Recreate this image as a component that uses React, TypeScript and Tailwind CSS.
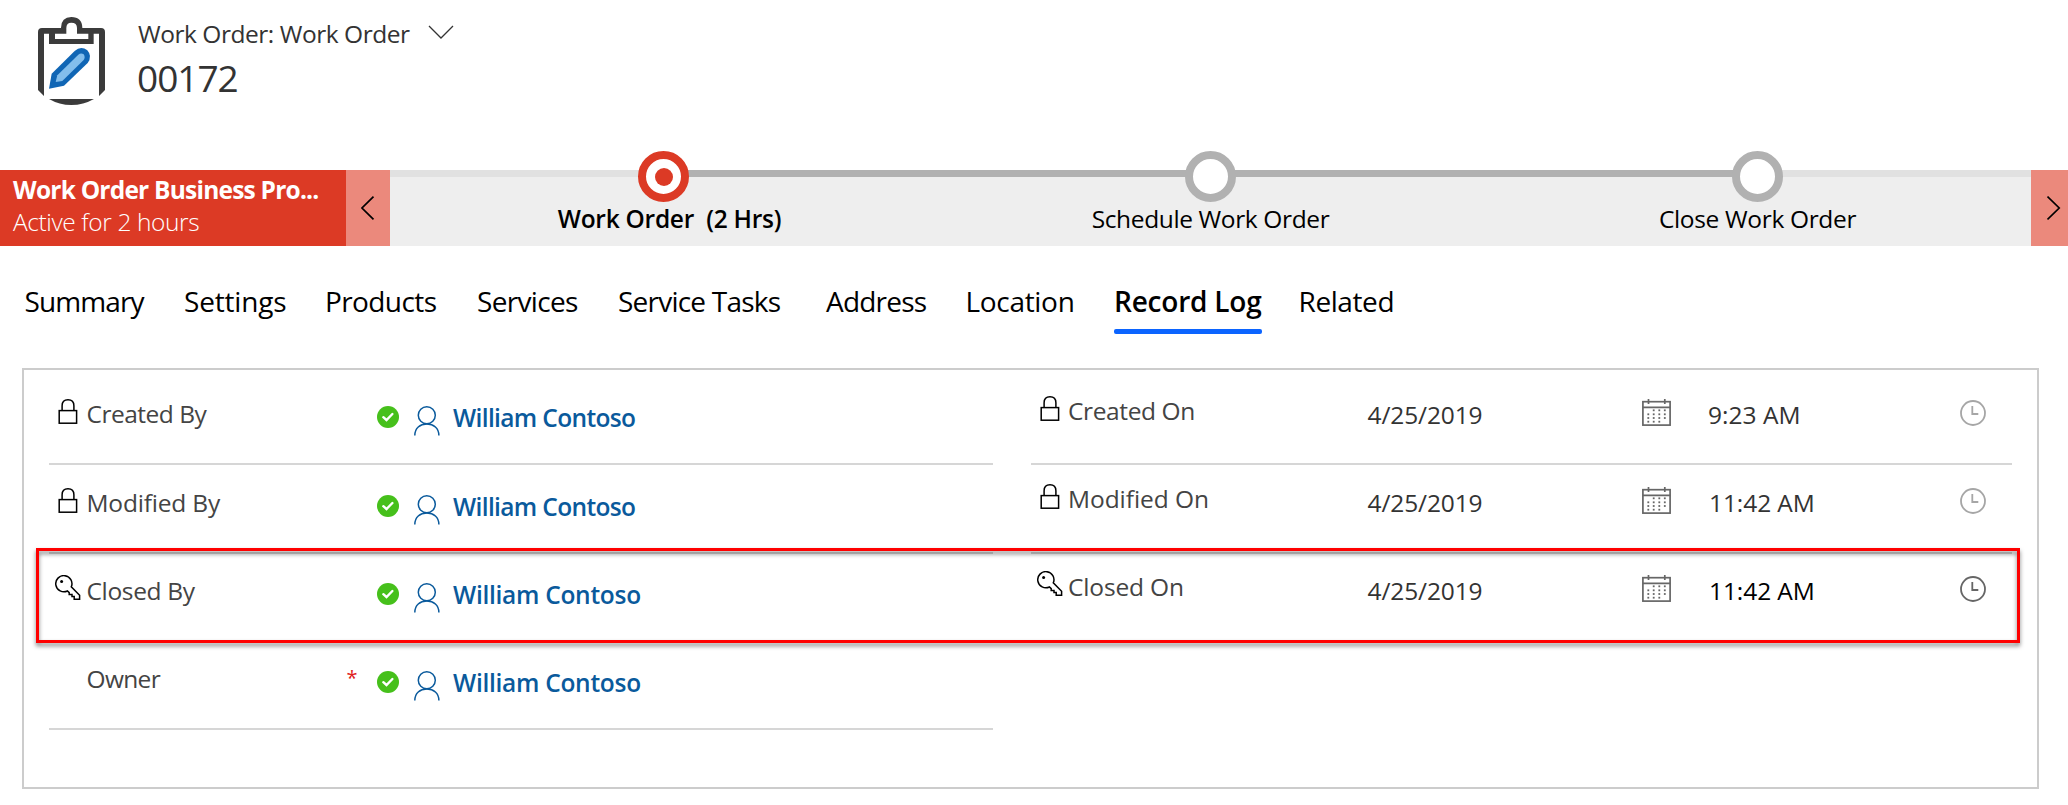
import type { ReactNode } from "react";

const tabs = [
  { name: "Summary", cls: "w-[160px] pl-px tracking-[-0.9px]" },
  { name: "Settings", cls: "w-[141.5px] pl-[0.5px] tracking-[-0.19px]" },
  { name: "Products", cls: "w-[152px] tracking-[-0.6px]" },
  { name: "Services", cls: "w-[141px] tracking-[-0.66px]" },
  { name: "Service Tasks", cls: "w-[208px] tracking-[-0.78px]" },
  { name: "Address", cls: "w-[139px] tracking-[-0.8px]" },
  { name: "Location", cls: "w-[149px] pl-[0.5px] tracking-[-0.31px]" },
  { name: "Record Log", cls: "w-[184px] tracking-[-0.22px]", active: true },
  { name: "Related", cls: "pl-[0.5px] tracking-[-0.4px]" },
];

const people = [
  { label: "Created By", icon: "lock", labelCls: "tracking-[-0.5px]", nameCls: "tracking-[-0.64px]", rowCls: "h-[95px]" },
  { label: "Modified By", icon: "lock", labelCls: "tracking-[-0.18px]", nameCls: "tracking-[-0.64px]", rowCls: "h-[89px]" },
  { label: "Closed By", icon: "key", labelCls: "tracking-[-0.35px]", nameCls: "tracking-[-0.28px]", rowCls: "h-[88px]" },
  { label: "Owner", icon: "", labelCls: "tracking-[-0.65px]", nameCls: "tracking-[-0.28px]", rowCls: "h-[88px]", required: true },
];

const dates = [
  { label: "Created On", icon: "lock", labelCls: "tracking-[-0.38px]", time: "9:23 AM", timeCls: "tracking-[0.05px] text-[#333]", clockCls: "text-[#a6a6a6]", rowCls: "h-[95px]" },
  { label: "Modified On", icon: "lock", labelCls: "tracking-[-0.05px]", time: "11:42 AM", timeCls: "pl-px tracking-[-0.08px] text-[#333]", clockCls: "text-[#a6a6a6]", rowCls: "h-[89px] pb-px" },
  { label: "Closed On", icon: "key", labelCls: "tracking-[-0.15px]", time: "11:42 AM", timeCls: "pl-px tracking-[-0.08px] text-black", clockCls: "text-[#666]", rowCls: "h-[88px] pb-px" },
];

function WorkOrderIcon() {
  return (
    <svg viewBox="114 51 201 264" className="h-[88px] w-[67px]">
      <path
        fill="#3b3b3b"
        fillRule="evenodd"
        d="M132 288 114 270V96Q114 84 126 84H183V83Q184 51 214 51 246 51 247 83V84H303Q315 84 315 96V270L297 288V101H281V132H147V101H132ZM165 101V117H265V101H231V84Q231 68 214 68 199 68 199 84V101Z"
      />
      <path fill="#3b3b3b" d="M147 297H282Q250 315 214 315 178 315 147 297Z" />
      <path fill="#1066b5" d="M147 266 155 221 224 153Q243 136 262 151 278 169 263 189L192 257Z" />
      <path fill="#83beec" d="M167 246 172 226 235 164Q243 157 251 163 257 172 251 180L187 243Z" />
    </svg>
  );
}

function Lock() {
  return (
    <svg viewBox="0 0 26 25" className="h-[25px] w-[26px]" fill="none" stroke="#000" strokeWidth="1.5">
      <rect x="4.2" y="11.6" width="17.4" height="12.6" />
      <path d="M7.1 11.5V6.8Q7.1.8 13 .8T18.9 6.8V11.5" />
    </svg>
  );
}

function Key() {
  return (
    <svg viewBox="0 0 26 26" className="h-[26px] w-[26px]" fill="none" stroke="#000" strokeWidth="1.5">
      <path d="M16.3 11.9A8.1 8.1 0 1 0 12.4 16L14.2 17.6V19.4H17V21.4H19.2V24.3H24.6V20.2Z" />
      <circle cx="6.6" cy="6.4" r="1.5" fill="#000" stroke="none" />
    </svg>
  );
}

function FieldIcon({ kind }: { kind: string }) {
  return <span className="w-[26px]">{kind === "lock" ? <Lock /> : kind === "key" ? <Key /> : null}</span>;
}

function Check() {
  return (
    <svg viewBox="0 0 22 22" className="mb-[35px] size-[22px]">
      <circle cx="11" cy="11" r="11" fill="#46c01b" />
      <path d="M6.3 11.2 9.5 14 15.4 8" fill="none" stroke="#fff" strokeWidth="2.4" strokeLinecap="round" />
    </svg>
  );
}

function Person() {
  return (
    <svg viewBox="0 0 26 30" className="mb-[27px] ml-[14.5px] h-[30px] w-[26px]" fill="none" stroke="#0a5a9c" strokeWidth="1.5">
      <circle cx="12.8" cy="9.3" r="8.5" />
      <path d="M.8 29.5C.8 22 6 18 12.8 18S24.9 22 24.9 29.5" />
    </svg>
  );
}

const dots = [
  [11.7, 11.3], [17.3, 11.3], [22.8, 11.3],
  [6.3, 15.3], [11.7, 15.3], [17.3, 15.3], [22.8, 15.3],
  [6.3, 19], [11.7, 19], [17.3, 19], [22.8, 19],
  [6.3, 22.7], [11.7, 22.7], [17.3, 22.7],
];

function Calendar() {
  return (
    <svg viewBox="0 0 29 27" className="mb-[37px] h-[27px] w-[29px]" fill="none" stroke="#666" strokeWidth="1.7">
      <rect x=".9" y="2.7" width="27.2" height="23.4" />
      <path d="M.8 8.3H28.2M6.5 0V5M22.8 0V5" />
      {dots.map(([x, y]) => (
        <rect key={`${x}-${y}`} x={x - 0.9} y={y - 0.9} width="1.8" height="1.8" fill="#666" stroke="none" />
      ))}
    </svg>
  );
}

function Clock({ className }: { className: string }) {
  return (
    <svg viewBox="0 0 26 26" className={`mb-[37px] size-[26px] ${className}`} fill="none" stroke="currentColor" strokeWidth="1.8">
      <circle cx="13" cy="13" r="12" />
      <path d="M12.3 6V14H18.3" />
    </svg>
  );
}

function Stage({ left, right, label, labelCls, active }: { left: string; right: string; label: string; labelCls: string; active?: boolean }) {
  return (
    <div className="flex flex-col items-center">
      <div className="flex h-[7px] w-full">
        <div className={`flex-1 ${left}`} />
        <div className={`flex-1 ${right}`} />
      </div>
      <div
        className={`z-10 -mt-[26px] flex size-[51px] items-center justify-center rounded-full border-8 bg-white ${
          active ? "border-[#dc3a25]" : "border-[#b1b1b1]"
        }`}
      >
        {active && <div className="size-[18px] rounded-full bg-[#dc3a25]" />}
      </div>
      <div className={`mt-px whitespace-pre text-[24.5px] leading-8 text-black ${labelCls}`}>{label}</div>
    </div>
  );
}

function Label({ children, className }: { children: ReactNode; className: string }) {
  return <div className={`text-[24.5px] leading-8 text-[#444] ${className}`}>{children}</div>;
}

export default function App() {
  return (
    <div className="h-[805px] w-[2068px] overflow-hidden whitespace-nowrap bg-white font-['Open_Sans','Noto_Sans',sans-serif]">
      <header className="flex h-[170px] pl-[38px] pt-[17px]">
        <WorkOrderIcon />
        <div className="ml-[33px] flex flex-col text-[#333]">
          <div className="flex items-start">
            <span className="w-[290px] pt-px text-[24.5px] leading-8 tracking-[-0.46px]">Work Order: Work Order</span>
            <svg viewBox="0 0 26 14" className="mt-[8px] h-[14px] w-[26px]" fill="none" stroke="#333" strokeWidth="1.3">
              <path d="M1 1 13 13 25 1" />
            </svg>
          </div>
          <h1 className="mt-[4px] -ml-[1px] text-[37px] leading-[48px] tracking-[-1px]">00172</h1>
        </div>
      </header>

      <section className="flex h-[76px]">
        <div className="w-[346px] bg-[#dc3a25] pl-[13px] pt-[4px] text-[24.5px] text-white">
          <div className="leading-8 font-bold tracking-[-0.78px]">Work Order Business Pro...</div>
          <div className="leading-8 font-light tracking-[-0.4px]">Active for 2 hours</div>
        </div>
        <div className="w-[44px] bg-[#eb897c] pl-[15px] pt-[26px]">
          <svg viewBox="0 0 14 24" className="h-6 w-[14px]" fill="none" stroke="#000" strokeWidth="1.7">
            <path d="M12.5.6 1 12 12.5 23.4" />
          </svg>
        </div>
        <div className="grid w-[1641px] grid-cols-3 bg-[#eee]">
          <Stage active left="bg-[#e1e1e1]" right="bg-[#b1b1b1]" label="Work Order  (2 Hrs)" labelCls="pl-3 font-semibold tracking-[-0.26px]" />
          <Stage left="bg-[#b1b1b1]" right="bg-[#b1b1b1]" label="Schedule Work Order" labelCls="tracking-[-0.37px]" />
          <Stage left="bg-[#b1b1b1]" right="bg-[#e1e1e1]" label="Close Work Order" labelCls="tracking-[-0.34px]" />
        </div>
        <div className="w-[37px] bg-[#eb897c] pl-[16px] pt-[26px]">
          <svg viewBox="0 0 14 24" className="h-6 w-[14px]" fill="none" stroke="#000" strokeWidth="1.7">
            <path d="M.5.6 12.2 12 .5 23.4" />
          </svg>
        </div>
      </section>

      <nav className="flex h-[122px] pl-[23.5px] pt-[35px] text-[28px] leading-10 text-black">
        {tabs.map((t) => (
          <div key={t.name} className={t.cls}>
            {t.active ? (
              <div className="w-[148px]">
                <div className="font-semibold">{t.name}</div>
                <div className="mt-[8px] h-[5px] rounded-[2px] bg-[#0b64ff]" />
              </div>
            ) : (
              t.name
            )}
          </div>
        ))}
      </nav>

      <main className="relative ml-[22px] flex h-[421px] w-[2017px] gap-[38px] border-2 border-[#ccc] pl-[25px]">
        <div className="w-[944px]">
          {people.map((p) => (
            <div key={p.label} className={`flex items-end border-b-2 border-[#d6d6d6] ${p.rowCls}`}>
              <div className="mb-[39px] ml-[6px] flex">
                <FieldIcon kind={p.icon} />
              </div>
              <Label className={`mb-[33px] ml-[5.5px] w-[260px] ${p.labelCls}`}>{p.label}</Label>
              <div className="mb-[34px] w-[30.5px] text-[20px] leading-8 text-[#e02020]">{p.required ? "*" : ""}</div>
              <Check />
              <Person />
              <div className={`mb-[29px] ml-[13.5px] text-[24.5px] leading-8 font-semibold text-[#0a5a9c] ${p.nameCls}`}>William Contoso</div>
            </div>
          ))}
        </div>
        <div className="w-[981px]">
          {dates.map((d) => (
            <div key={d.label} className={`flex items-end border-b-2 border-[#d6d6d6] ${d.rowCls}`}>
              <div className="mb-[42px] ml-[5.5px] flex">
                <FieldIcon kind={d.icon} />
              </div>
              <Label className={`mb-[36px] ml-[5.5px] w-[299.5px] ${d.labelCls}`}>{d.label}</Label>
              <div className="mb-[32px] w-[274.5px] text-[24.5px] leading-8 tracking-[-0.12px] text-[#333]">4/25/2019</div>
              <Calendar />
              <div className={`mb-[32px] ml-[37px] w-[251.5px] text-[24.5px] leading-8 ${d.timeCls}`}>{d.time}</div>
              <Clock className={d.clockCls} />
            </div>
          ))}
        </div>
        <div className="absolute left-[12px] top-[178px] h-[95px] w-[1984px] border-3 border-[#f00] drop-shadow-[0px_3px_2px_rgba(0,0,0,0.5)]" />
      </main>
    </div>
  );
}
